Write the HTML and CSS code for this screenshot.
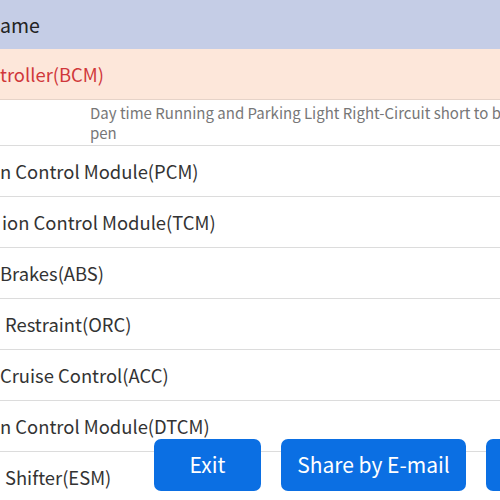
FILE: index.html
```html
<!DOCTYPE html>
<html lang="en">
<head>
  <title>Fault Code Report</title>
  <meta charset="utf-8">
  <meta name="viewport" content="width=device-width, initial-scale=1">
  <link rel="stylesheet" href="styles.css">
</head>
<body>
    <div class="report">
        <div class="report-head">ame</div>
        <ul class="module-list">
            <li class="module fault">troller(BCM)</li>
            <li class="module-detail">
                <span class="detail-line">Day time Running and Parking Light Right-Circuit short to battery or o</span>
                <span class="detail-line">pen</span>
            </li>
            <li class="module">n Control Module(PCM)</li>
            <li class="module indent-2">ion Control Module(TCM)</li>
            <li class="module">Brakes(ABS)</li>
            <li class="module indent-6">Restraint(ORC)</li>
            <li class="module">Cruise Control(ACC)</li>
            <li class="module">n Control Module(DTCM)</li>
            <li class="module indent-6">Shifter(ESM)</li>
        </ul>
    </div>
    <div class="report-actions">
        <div tabindex="0" role="button" class="action-btn exit">Exit</div>
        <div tabindex="0" role="button" class="action-btn share">Share by E-mail</div>
        <div tabindex="0" role="button" class="action-btn print">Print</div>
    </div>
</body>
</html>
```

FILE: styles.css
```css
body {
    margin: 0;
    width: 500px;
    height: 500px;
    overflow: hidden;
    position: relative;
    font-family: "Noto Sans CJK SC", "Noto Sans", sans-serif;
    color: #333;
    background: #fff;
}
.report-head {
    height: 49px;
    line-height: 49px;
    font-size: 19.5px;
    background: #c5cde6;
    color: #222;
}
.module-list {
    margin: 0;
    padding: 0;
    list-style: none;
}
.module {
    height: 50px;
    line-height: 50px;
    font-size: 18.4px;
    border-bottom: 1px solid #dcdcdc;
    white-space: nowrap;
}
.module.fault {
    background: #fde7da;
    color: #d0373a;
    border-bottom-color: #e6d3c8;
}
.indent-2 {
    padding-left: 2px;
}
.indent-6 {
    padding-left: 5px;
}
.module-detail {
    box-sizing: border-box;
    height: 46px;
    padding: 3px 0 0 90px;
    border-bottom: 1px solid #dcdcdc;
    font-size: 15px;
    line-height: 20px;
    color: #777;
}
.detail-line {
    display: block;
    white-space: nowrap;
}
.report-actions {
    position: absolute;
    top: 439px;
    left: 154px;
    display: flex;
    gap: 20px;
}
.action-btn {
    height: 52px;
    line-height: 50px;
    padding: 0 18px;
    border-radius: 7px;
    background: #0b6fe3;
    color: #fff;
    font-size: 21px;
    text-align: center;
    white-space: nowrap;
}
.action-btn.exit {
    width: 107px;
    padding: 0;
}
.action-btn.share {
    width: 185px;
    padding: 0;
}
```
